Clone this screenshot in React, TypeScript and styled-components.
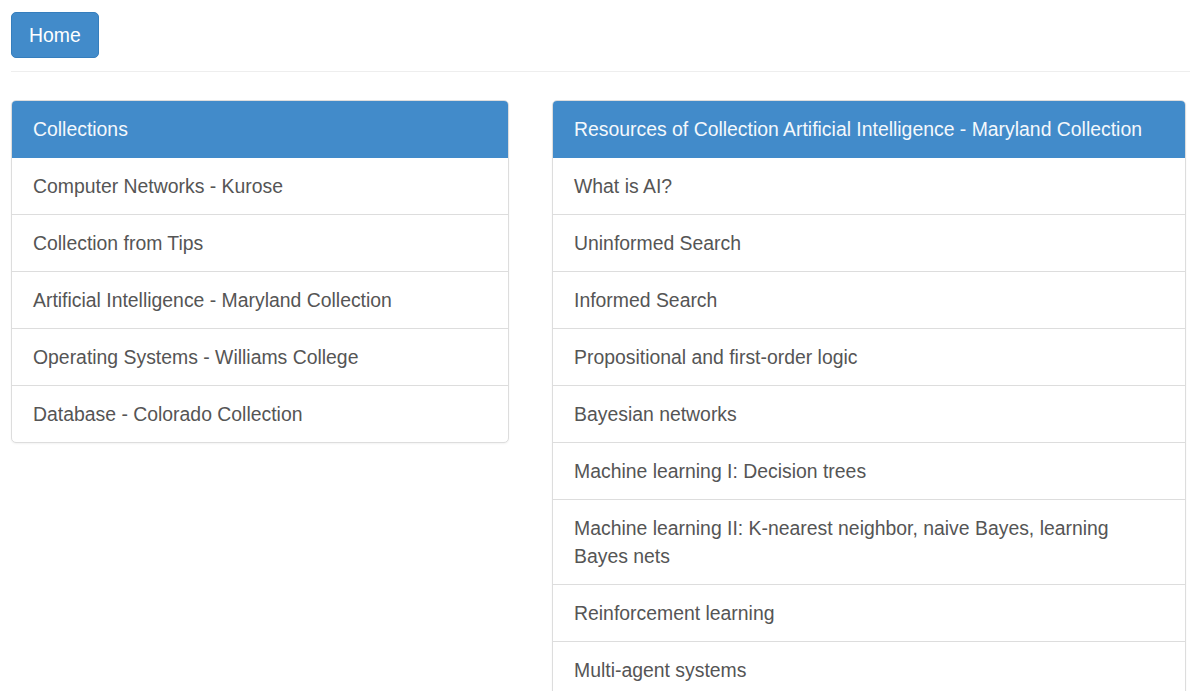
import styled, { createGlobalStyle } from "styled-components";

const collections = [
  "Computer Networks - Kurose",
  "Collection from Tips",
  "Artificial Intelligence - Maryland Collection",
  "Operating Systems - Williams College",
  "Database - Colorado Collection",
];

const resources = [
  "What is AI?",
  "Uninformed Search",
  "Informed Search",
  "Propositional and first-order logic",
  "Bayesian networks",
  "Machine learning I: Decision trees",
  "Machine learning II: K-nearest neighbor, naive Bayes, learning Bayes nets",
  "Reinforcement learning",
  "Multi-agent systems",
];

const App = () => {
  return (
    <>
      <GlobalStyle />
      <Page>
        <TopBar>
          <HomeButton>Home</HomeButton>
        </TopBar>
        <Divider />
        <Columns>
          <Panel>
            <PanelHeading>Collections</PanelHeading>
            <List>
              {collections.map((name) => (
                <ListItem key={name}>{name}</ListItem>
              ))}
            </List>
          </Panel>
          <Panel>
            <PanelHeading>
              Resources of Collection Artificial Intelligence - Maryland Collection
            </PanelHeading>
            <List>
              {resources.map((name) => (
                <ListItem key={name}>{name}</ListItem>
              ))}
            </List>
          </Panel>
        </Columns>
      </Page>
    </>
  );
};

export default App;

const GlobalStyle = createGlobalStyle`
  html, body {
    margin: 0;
    padding: 0;
    background: #fff;
    font-family: "Liberation Sans", Arial, Helvetica, sans-serif;
    color: #555;
  }
  * {
    box-sizing: border-box;
  }
`;

const Page = styled.div`
  padding: 12px 0 0 11px;
  height: 691px;
  overflow: hidden;
`;

const TopBar = styled.div`
  display: flex;
`;

const HomeButton = styled.button`
  height: 46px;
  padding: 0 17px;
  font-family: inherit;
  font-size: 19.4px;
  line-height: 26px;
  color: #fff;
  background: #428bca;
  border: 1px solid #357ebd;
  border-radius: 5px;
  cursor: pointer;
`;

const Divider = styled.hr`
  margin: 13px 0 28px;
  border: 0;
  border-top: 1px solid #eee;
`;

const Columns = styled.div`
  display: grid;
  grid-template-columns: 498px 634px;
  column-gap: 43px;
  align-items: start;
`;

const Panel = styled.div`
  border: 1px solid #ddd;
  border-radius: 5px;
  background: #fff;
  box-shadow: 0 1px 2px rgba(0, 0, 0, 0.05);
  overflow: hidden;
`;

const PanelHeading = styled.div`
  padding: 14px 21px;
  margin: -1px -1px 0;
  font-size: 19.4px;
  line-height: 28px;
  color: #f4f8fc;
  background: #428bca;
  border: 1px solid #428bca;
`;

const List = styled.div`
  display: flex;
  flex-direction: column;
`;

const ListItem = styled.div`
  padding: 14px 60px 14px 21px;
  font-size: 19.4px;
  line-height: 28px;
  color: #555;
  border-top: 1px solid #ddd;

  &:first-child {
    border-top: 0;
  }
`;
